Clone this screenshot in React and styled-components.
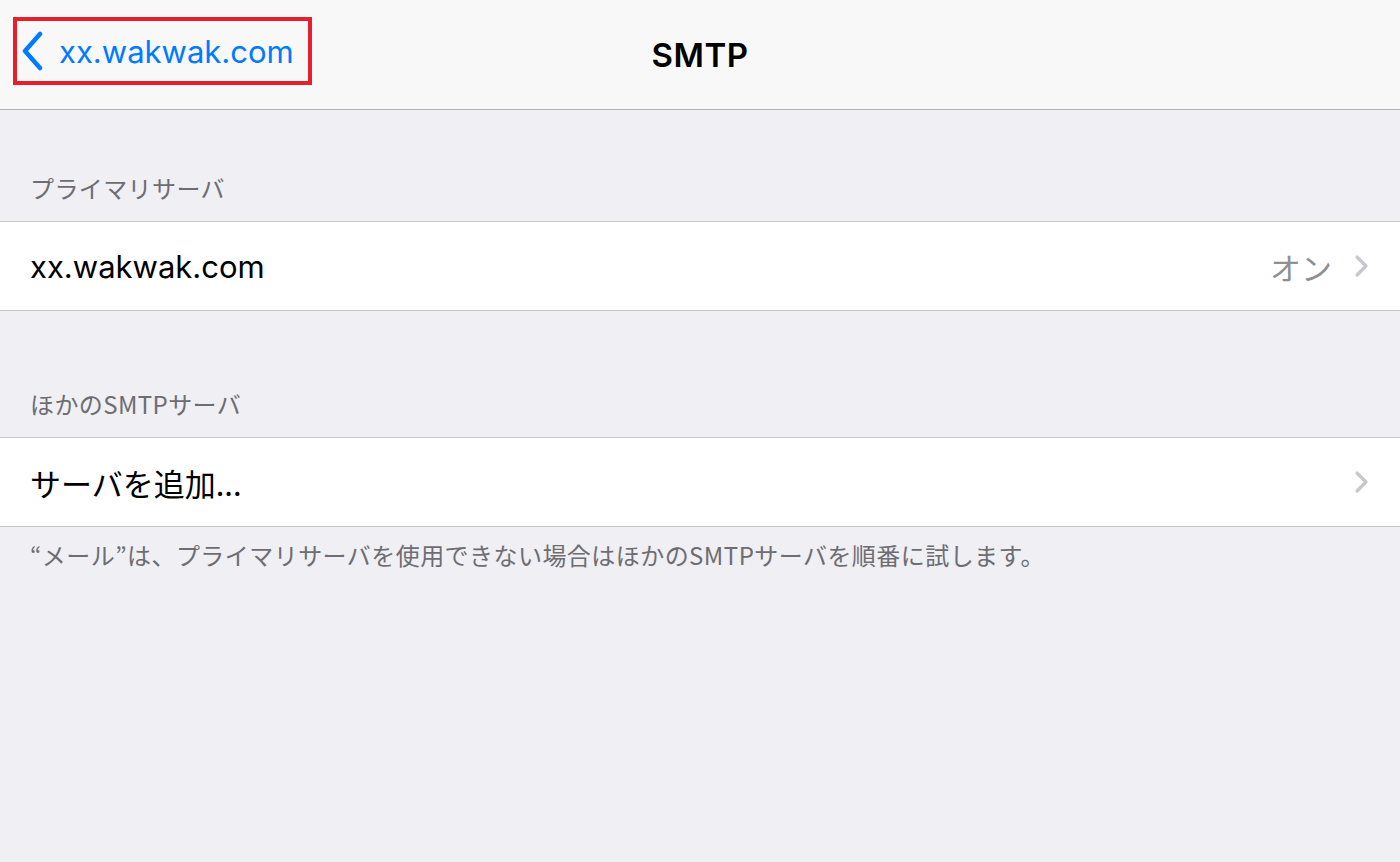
import React from 'react';
import styled, { createGlobalStyle } from 'styled-components';

const GlobalStyle = createGlobalStyle`
  html, body {
    margin: 0;
    padding: 0;
    background: #efeff4;
  }
  body {
    font-family: Inter, "Noto Sans CJK JP", sans-serif;
    -webkit-font-smoothing: antialiased;
  }
`;

const Page = styled.div`
  width: 1400px;
  height: 862px;
  background: #efeff4;
  overflow: hidden;
`;

const NavBar = styled.div`
  height: 109px;
  background: #f8f8f8;
  border-bottom: 1px solid #b2b2b2;
  display: grid;
  grid-template-columns: 1fr auto 1fr;
  align-items: center;
  padding: 0 13px;
`;

const BackButton = styled.div`
  justify-self: start;
  align-self: start;
  margin-top: 17px;
  display: flex;
  align-items: center;
  gap: 14px;
  height: 60px;
  padding: 0 14px 0 4px;
  border: 4px solid #e5202a;
  color: #007aff;
  font-size: 31px;
  font-weight: 400;
`;

const Title = styled.div`
  font-size: 33px;
  font-weight: 600;
  color: #000;
  letter-spacing: 0.5px;
`;

const SectionHeader = styled.div`
  height: ${p => p.$h}px;
  display: flex;
  align-items: flex-end;
  padding: 0 30px 16px;
  box-sizing: border-box;
  font-family: "Noto Sans CJK JP", sans-serif;
  font-size: 24px;
  letter-spacing: 0.4px;
  color: #6d6d72;
`;

const Group = styled.div`
  background: #fff;
  border-top: 1px solid #c8c7cc;
  border-bottom: 1px solid #c8c7cc;
`;

const Row = styled.div`
  height: 88px;
  display: flex;
  align-items: center;
  padding: 0 30px;
`;

const Label = styled.div`
  flex: 1;
  font-size: 31px;
  color: #000;
  font-family: ${p => (p.$jp ? '"Noto Sans CJK JP", sans-serif' : 'Inter, "Noto Sans CJK JP", sans-serif')};
`;

const Detail = styled.div`
  font-family: "Noto Sans CJK JP", sans-serif;
  font-size: 31px;
  color: #8e8e93;
  margin-right: 22px;
`;

const Footer = styled.div`
  padding: 10px 30px 0;
  font-family: "Noto Sans CJK JP", sans-serif;
  font-size: 24px;
  letter-spacing: 0.45px;
  color: #6d6d72;
`;

const BackChevron = () => (
  <svg width="24" height="40" viewBox="0 0 24 40">
    <path d="M19 3 L4 20 L19 37" fill="none" stroke="#007aff" strokeWidth="4.5" strokeLinecap="round" strokeLinejoin="round" />
  </svg>
);

const Chevron = () => (
  <svg width="16" height="24" viewBox="0 0 16 24">
    <path d="M3 3 L12 12 L3 21" fill="none" stroke="#c7c7cc" strokeWidth="3.2" strokeLinecap="round" strokeLinejoin="round" />
  </svg>
);

export default function App() {
  return (
    <Page>
      <GlobalStyle />
      <NavBar>
        <BackButton>
          <BackChevron />
          <span>xx.wakwak.com</span>
        </BackButton>
        <Title>SMTP</Title>
        <div />
      </NavBar>

      <SectionHeader $h={111}>プライマリサーバ</SectionHeader>
      <Group>
        <Row>
          <Label>xx.wakwak.com</Label>
          <Detail>オン</Detail>
          <Chevron />
        </Row>
      </Group>

      <SectionHeader $h={126}>ほかのSMTPサーバ</SectionHeader>
      <Group>
        <Row>
          <Label $jp>サーバを追加...</Label>
          <Chevron />
        </Row>
      </Group>

      <Footer>“メール”は、プライマリサーバを使用できない場合はほかのSMTPサーバを順番に試します。</Footer>
    </Page>
  );
}
